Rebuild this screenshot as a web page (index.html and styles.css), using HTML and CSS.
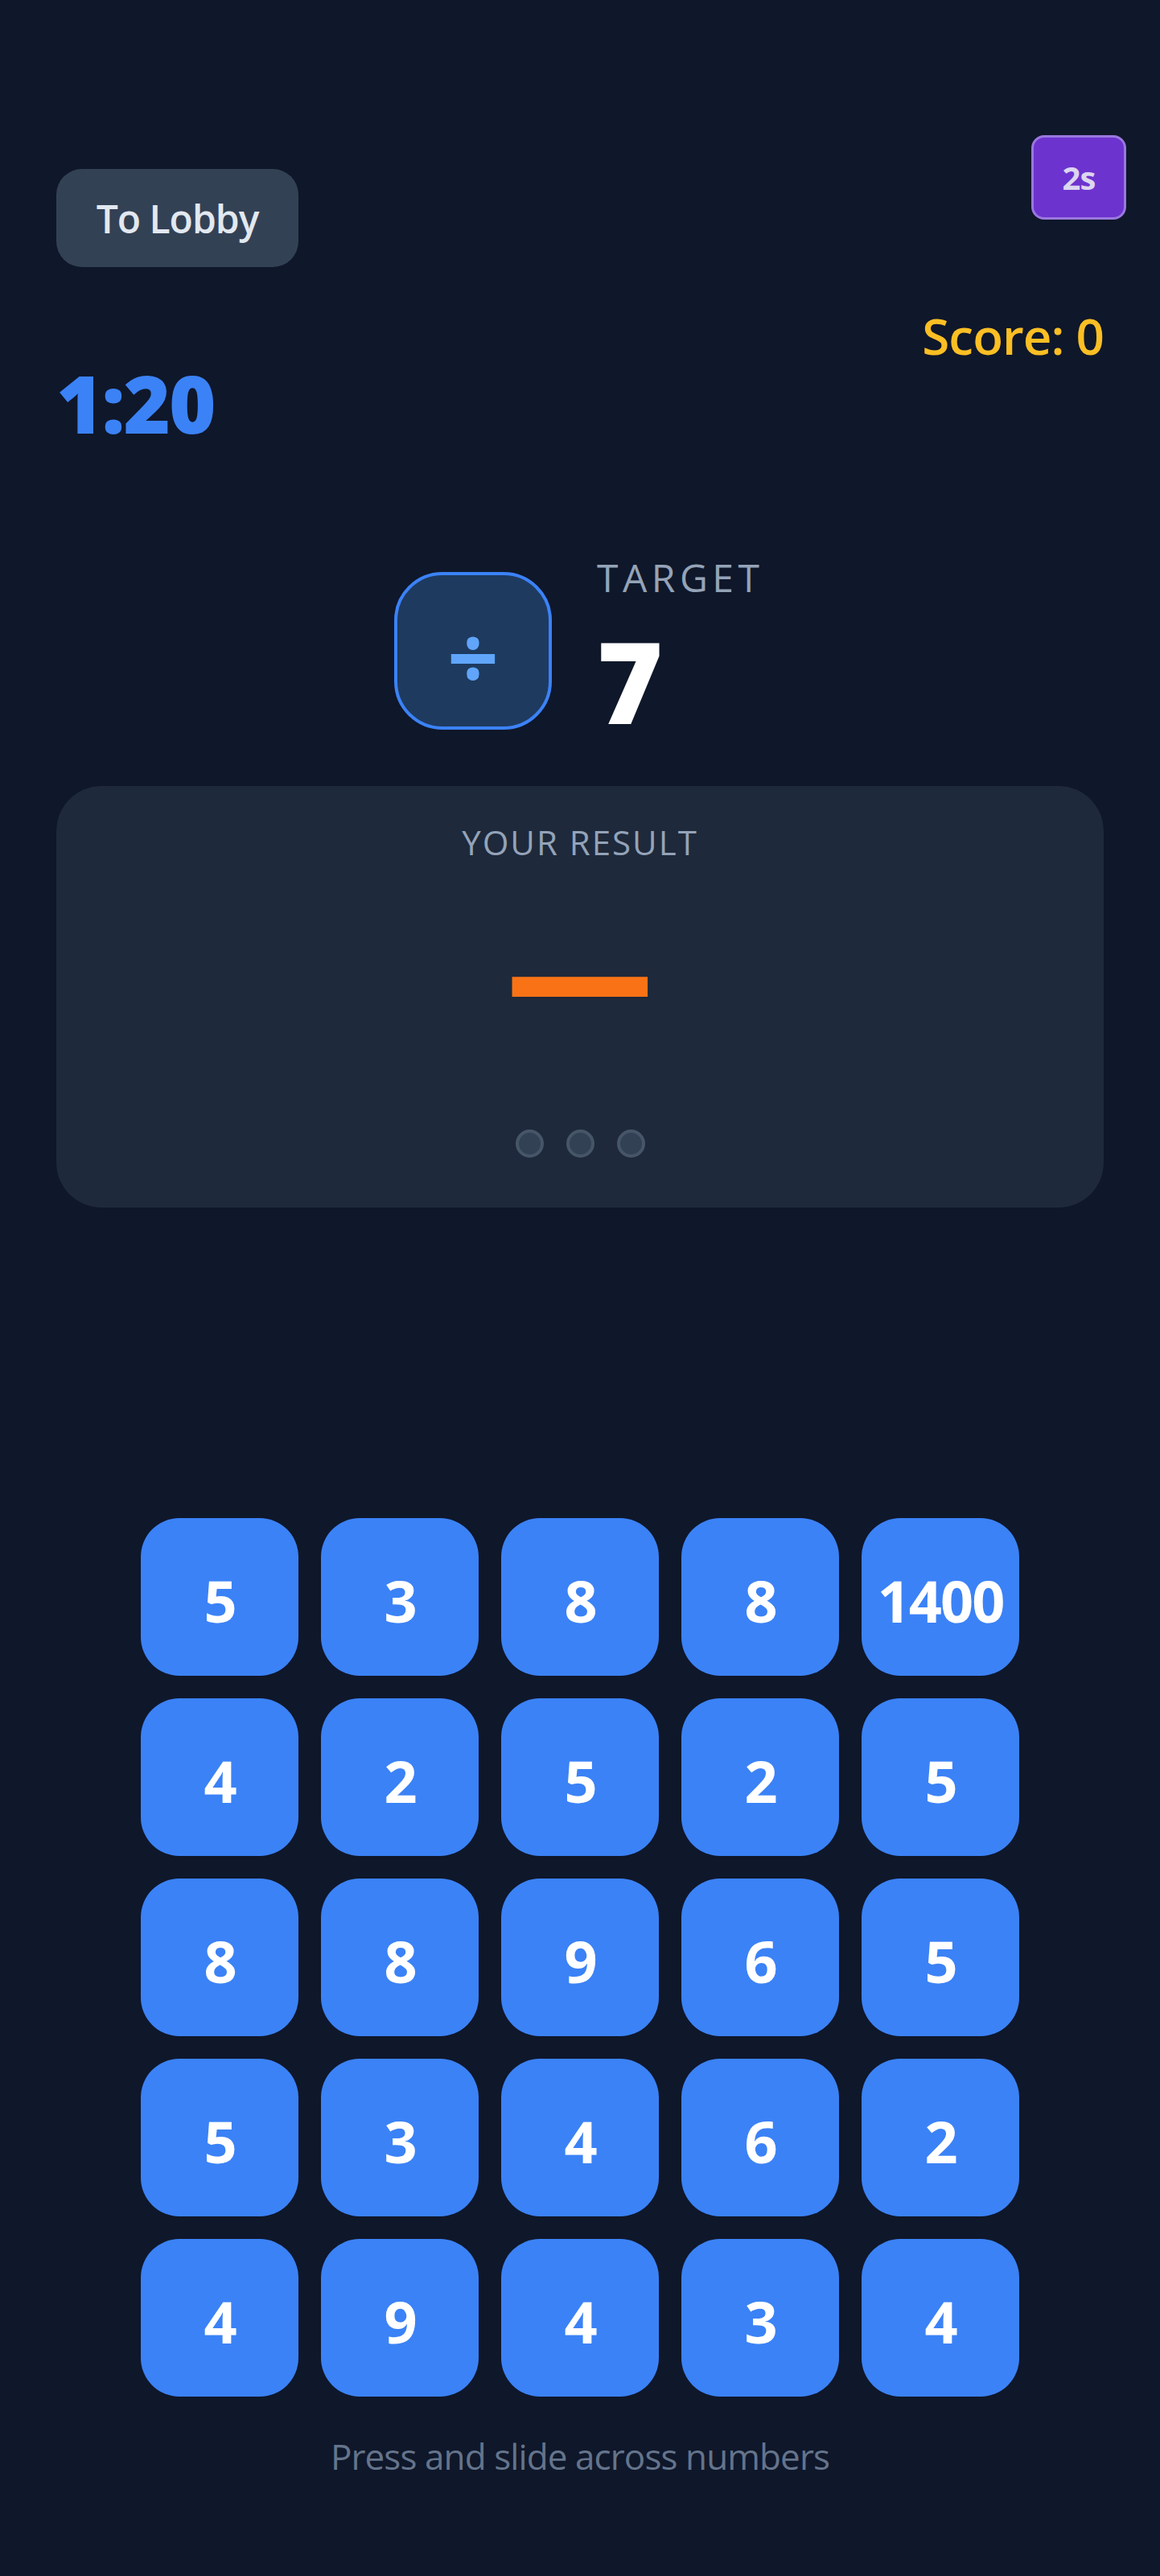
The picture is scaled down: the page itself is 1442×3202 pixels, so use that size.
FILE: index.html
```html
<!DOCTYPE html>
<html lang="en">
<head>
    <meta charset="UTF-8">
    <meta name="viewport" content="width=device-width, initial-scale=1.0">
    <title>Number Slide</title>
    <link rel="stylesheet" href="styles.css">
</head>
<body>
    <div class="wrap">
        <div class="time-badge">2s</div>
        <div class="top-bar">
            <div>
                <button class="btn-lobby">To Lobby</button>
                <div class="clock">1:20</div>
            </div>
            <div class="score">Score: 0</div>
        </div>
        <div class="target-row">
            <div class="op-box">÷</div>
            <div class="target-info">
                <div class="target-label">TARGET</div>
                <div class="target-value">7</div>
            </div>
        </div>
        <div class="result-card">
            <div class="result-label">YOUR RESULT</div>
            <div class="result-value">—</div>
            <div class="dots">
                <span class="dot"></span>
                <span class="dot"></span>
                <span class="dot"></span>
            </div>
        </div>
        <div class="grid">
            <button class="tile">5</button>
            <button class="tile">3</button>
            <button class="tile">8</button>
            <button class="tile">8</button>
            <button class="tile">1400</button>
            <button class="tile">4</button>
            <button class="tile">2</button>
            <button class="tile">5</button>
            <button class="tile">2</button>
            <button class="tile">5</button>
            <button class="tile">8</button>
            <button class="tile">8</button>
            <button class="tile">9</button>
            <button class="tile">6</button>
            <button class="tile">5</button>
            <button class="tile">5</button>
            <button class="tile">3</button>
            <button class="tile">4</button>
            <button class="tile">6</button>
            <button class="tile">2</button>
            <button class="tile">4</button>
            <button class="tile">9</button>
            <button class="tile">4</button>
            <button class="tile">3</button>
            <button class="tile">4</button>
        </div>
        <div class="hint">Press and slide across numbers</div>
    </div>
</body>
</html>
```

FILE: styles.css
```css
* {box-sizing: border-box;}
body {
    padding: 0;
    margin: 0;
    background-color: #0f172a;
    font-family: "Open Sans", "Noto Sans", sans-serif;
}
.wrap {
    position: relative;
    height: 3202px;
    padding: 210px 70px 0;
    overflow: hidden;
}
.time-badge {
    position: absolute;
    top: 168px;
    right: 42px;
    width: 118px;
    height: 105px;
    display: flex;
    align-items: center;
    justify-content: center;
    background-color: #6d33cf;
    border: 3px solid #9a78de;
    border-radius: 16px;
    color: #dcd6f0;
    font-size: 40px;
    font-weight: 700;
    letter-spacing: -1px;
}
.top-bar {
    display: flex;
    justify-content: space-between;
    align-items: flex-start;
}
.btn-lobby {
    display: block;
    width: 301px;
    height: 122px;
    background-color: #334155;
    border: 0;
    border-radius: 32px;
    color: #e2e8f0;
    font-family: inherit;
    font-size: 48px;
    font-weight: 600;
    letter-spacing: -1px;
}
.clock {
    margin-top: 114px;
    color: #3b82f6;
    font-size: 100px;
    font-weight: 800;
    line-height: 108px;
    letter-spacing: -2px;
}
.score {
    margin-top: 167px;
    color: #fbbf24;
    font-size: 62px;
    font-weight: 600;
    line-height: 80px;
    letter-spacing: -1px;
}
.target-row {
    display: flex;
    align-items: flex-start;
    gap: 56px;
    margin-top: 131px;
    margin-left: 420px;
}
.op-box {
    width: 196px;
    height: 196px;
    margin-top: 26px;
    padding-top: 10px;
    display: flex;
    align-items: center;
    justify-content: center;
    background-color: #1e3a5f;
    border: 4px solid #3b82f6;
    border-radius: 60px;
    color: #60a5fa;
    font-size: 112px;
    font-weight: 700;
}
.target-label {
    color: #94a3b8;
    font-size: 48px;
    line-height: 66px;
    letter-spacing: 5.5px;
}
.target-value {
    margin-top: 25px;
    color: #fff;
    font-size: 140px;
    font-weight: 800;
    line-height: 140px;
}
.result-card {
    height: 524px;
    margin-top: 61px;
    padding-top: 40px;
    background-color: #1e293b;
    border-radius: 56px;
    text-align: center;
}
.result-label {
    color: #94a3b8;
    font-size: 42px;
    line-height: 60px;
    letter-spacing: 2px;
}
.result-value {
    height: 220px;
    margin-top: 18px;
    color: #f97316;
    font-size: 182px;
    font-weight: 800;
    line-height: 220px;
}
.dots {
    display: flex;
    justify-content: center;
    gap: 28px;
    margin-top: 89px;
}
.dot {
    width: 35px;
    height: 35px;
    background-color: #334155;
    border: 4px solid #475569;
    border-radius: 50%;
}
.grid {
    display: grid;
    grid-template-columns: repeat(5, 196px);
    grid-auto-rows: 196px;
    gap: 28px;
    justify-content: center;
    margin-top: 386px;
}
.tile {
    display: flex;
    align-items: center;
    justify-content: center;
    padding: 8px 0 0;
    background-color: #3b82f6;
    border: 0;
    border-radius: 48px;
    color: #fff;
    font-family: inherit;
    font-size: 72px;
    font-weight: 700;
    letter-spacing: -2px;
}
.hint {
    margin-top: 44px;
    color: #64748b;
    font-size: 44px;
    line-height: 60px;
    text-align: center;
    letter-spacing: -0.9px;
}
```
